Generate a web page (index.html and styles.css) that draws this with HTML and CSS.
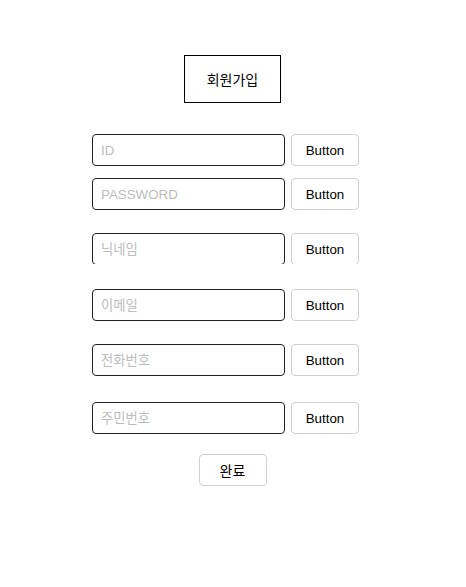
FILE: index.html
```html
<!DOCTYPE html>
<html lang="ko">

<head>
  <meta charset="UTF-8">
  <meta name="viewport" content="width=device-width, initial-scale=1.0">
  <title>회원가입</title>
  <link rel="stylesheet" href="styles.css">
</head>

<body>
  <div class="container">
    <div class="title">회원가입</div>
    <div class="form">
      <div class="row row-id">
        <input class="field" type="text" placeholder="ID">
        <button class="btn">Button</button>
      </div>
      <div class="row row-pw">
        <input class="field" type="password" placeholder="PASSWORD">
        <button class="btn">Button</button>
      </div>
      <div class="row row-nick">
        <input class="field" type="text" placeholder="닉네임">
        <button class="btn">Button</button>
      </div>
      <div class="row row-mail">
        <input class="field" type="text" placeholder="이메일">
        <button class="btn">Button</button>
      </div>
      <div class="row row-tel">
        <input class="field" type="text" placeholder="전화번호">
        <button class="btn">Button</button>
      </div>
      <div class="row row-jumin">
        <input class="field" type="text" placeholder="주민번호">
        <button class="btn">Button</button>
      </div>
    </div>
    <div class="submit">
      <button class="btn btn-done">완료</button>
    </div>
  </div>
</body>

</html>
```

FILE: styles.css
```css
* {
  padding: 0;
  margin: 0;
  box-sizing: border-box;
}

body {
  margin: 8px;
  background: #fff;
  font-family: "Liberation Sans", "Noto Sans CJK KR", sans-serif;
  color: #000;
}

.container {
  display: flex;
  flex-direction: column;
  align-items: center;
  padding-top: 47px;
}

.title {
  width: 97px;
  height: 48px;
  margin-right: 1px;
  border: 1px solid #000;
  display: flex;
  align-items: center;
  justify-content: center;
  font-size: 14px;
  font-family: "Noto Sans CJK KR", sans-serif;
}

.form {
  margin-top: 31px;
}

.row {
  width: 282px;
  display: flex;
  gap: 6px;
}

.row-pw {
  margin-top: 12px;
}

.row-nick {
  margin-top: 23px;
  height: 31px;
  overflow: hidden;
}

.row-mail {
  margin-top: 25px;
}

.row-tel {
  margin-top: 23px;
}

.row-jumin {
  margin-top: 26px;
}

.field {
  width: 193px;
  height: 32px;
  flex: none;
  border: 1px solid #222;
  border-radius: 4px;
  padding: 0 8px;
  font-size: 13.33px;
  font-family: "Liberation Sans", "Noto Sans CJK KR", sans-serif;
  outline: none;
}

.field::placeholder {
  color: #bdbdbd;
}

.btn {
  width: 68px;
  height: 32px;
  flex: none;
  background: #fff;
  border: 1px solid #d0d0d0;
  border-radius: 4px;
  font-size: 13.33px;
  font-family: "Liberation Sans", "Noto Sans CJK KR", sans-serif;
  color: #000;
}

.submit {
  margin-top: 20px;
  margin-right: 1px;
}

.btn-done {
  font-size: 14px;
}
```
